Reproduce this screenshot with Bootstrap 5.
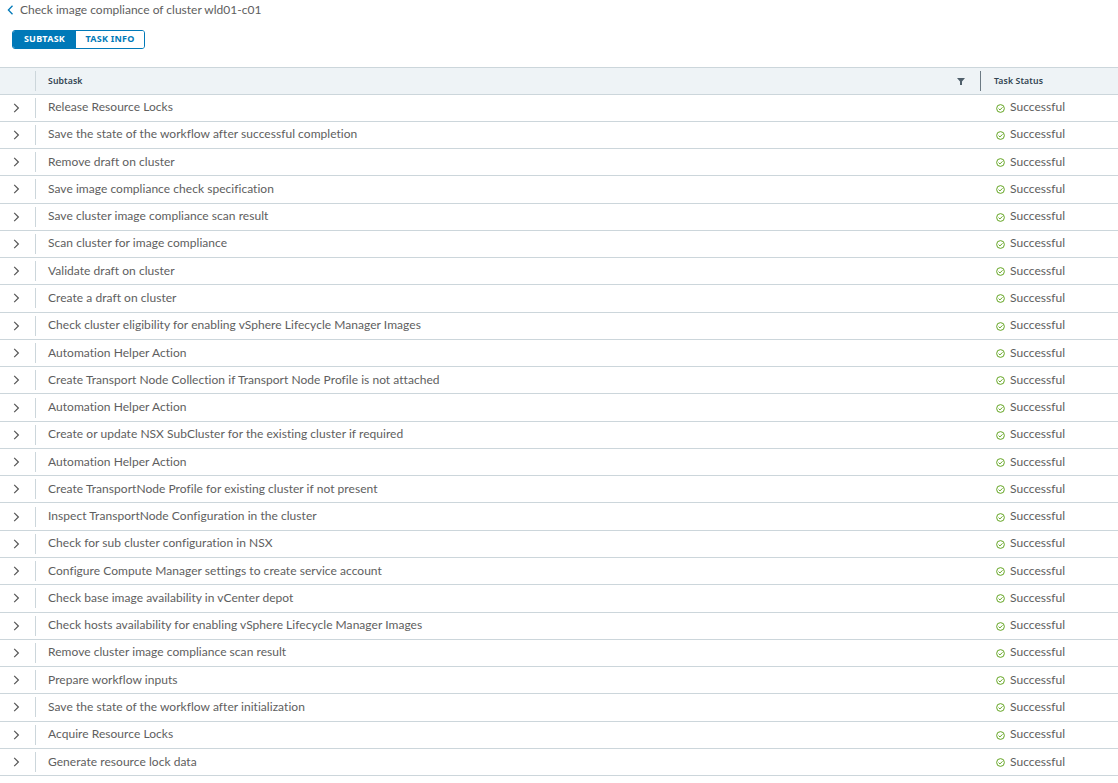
<!DOCTYPE html>
<html lang="en"><head><meta charset="utf-8"><title>Subtasks</title>
<link href="https://cdn.jsdelivr.net/npm/bootstrap@5.3.0/dist/css/bootstrap.min.css" rel="stylesheet">
<style>
html,body{height:783px;overflow:hidden;background:#fff}
body{font-family:"Lato",sans-serif;font-size:12px;color:#5e5e5e;letter-spacing:.04px}
.title-bar{height:19px;padding:0 0 0 7px;gap:6px;font-size:12px;line-height:18px;letter-spacing:0}
.seg-wrap{padding:11px 0 0 12px;height:48px}
.seg-group{width:133px;height:19px;border:1px solid #0079b8;border-radius:3px;overflow:hidden}
.seg-btn{font-family:"Noto Sans",sans-serif;font-size:9px;font-weight:700;letter-spacing:.25px;line-height:15px;text-align:center;padding:0 0 2px;border:0;border-radius:0;background:#fff;color:#0079b8}
.seg-btn.on{width:63px;background:#0079b8;color:#fff}
.seg-btn.off{flex:1 1 auto}
.grid-head{height:27.5px;background:#eef3f6;border-top:1px solid #ccd6db;border-bottom:1px solid #ccd6db;font-family:"Noto Sans",sans-serif;font-size:8.7px;font-weight:600;color:#314351;letter-spacing:.12px}
.head-label{padding-top:2px}
.grid-row{height:27.28px;border-bottom:1px solid #ccd6db}
.cell-exp{width:36px;height:20px;border-right:1px solid #ccd6db;padding-left:13px;flex:none}
.head-exp{height:20px}
.cell-main{padding-left:12px;padding-bottom:1px;min-width:0}
.cell-status{width:138px;flex:none;padding-left:16px;gap:5px}
.status-ico{margin-top:1px}
.status-text{padding-bottom:1px}
.head-status{padding-left:13px;padding-top:2px;width:138px;flex:none;height:20px;border-left:1px solid #6c7a84}
.filter-ico{margin-right:15px;margin-top:2px}
</style></head><body>
<div class="title-bar d-flex align-items-center">
<svg width="7" height="10" viewBox="0 0 7 10"><path d="M5.500 .8 1.400 5l4.100 4.200" fill="none" stroke="#0079b8" stroke-width="1.300"/></svg>
<span>Check image compliance of cluster wld01-c01</span></div>
<div class="seg-wrap"><div class="seg-group d-flex">
<button type="button" class="btn seg-btn on">SUBTASK</button>
<button type="button" class="btn seg-btn off">TASK INFO</button></div></div>
<div class="grid-head d-flex align-items-center">
<div class="cell-exp head-exp"></div>
<div class="cell-main head-label flex-grow-1">Subtask</div>
<svg class="filter-ico" width="8" height="7" viewBox="0 0 8 7"><path d="M0 0h8L5 3.500V7H3V3.500z" fill="#4f5f6b"/></svg>
<div class="head-status d-flex align-items-center">Task Status</div>
</div>
<div id="rows"></div>
<script>
const names=["Release Resource Locks","Save the state of the workflow after successful completion","Remove draft on cluster","Save image compliance check specification","Save cluster image compliance scan result","Scan cluster for image compliance","Validate draft on cluster","Create a draft on cluster","Check cluster eligibility for enabling vSphere Lifecycle Manager Images","Automation Helper Action","Create Transport Node Collection if Transport Node Profile is not attached","Automation Helper Action","Create or update NSX SubCluster for the existing cluster if required","Automation Helper Action","Create TransportNode Profile for existing cluster if not present","Inspect TransportNode Configuration in the cluster","Check for sub cluster configuration in NSX","Configure Compute Manager settings to create service account","Check base image availability in vCenter depot","Check hosts availability for enabling vSphere Lifecycle Manager Images","Remove cluster image compliance scan result","Prepare workflow inputs","Save the state of the workflow after initialization","Acquire Resource Locks","Generate resource lock data"];
document.getElementById('rows').innerHTML=names.map(n=>`<div class="grid-row d-flex align-items-center"><div class="cell-exp d-flex align-items-center"><svg width="7" height="10" viewBox="0 0 7 10"><path d="M1.200 .8 5.400 5 1.200 9.200" fill="none" stroke="#565656" stroke-width="1.200"/></svg></div><div class="cell-main flex-grow-1 text-truncate">${n}</div><div class="cell-status d-flex align-items-center"><svg class="status-ico" width="9" height="9" viewBox="0 0 10 10"><circle cx="5" cy="5" r="4.300" fill="none" stroke="#62a420" stroke-width="1.100"/><path d="M2.900 5.100 4.400 6.600 7.200 3.700" fill="none" stroke="#62a420" stroke-width="1.100"/></svg><span class="status-text">Successful</span></div></div>`).join('');
</script>
<script src="https://cdn.jsdelivr.net/npm/bootstrap@5.3.0/dist/js/bootstrap.bundle.min.js"></script>
</body></html>
